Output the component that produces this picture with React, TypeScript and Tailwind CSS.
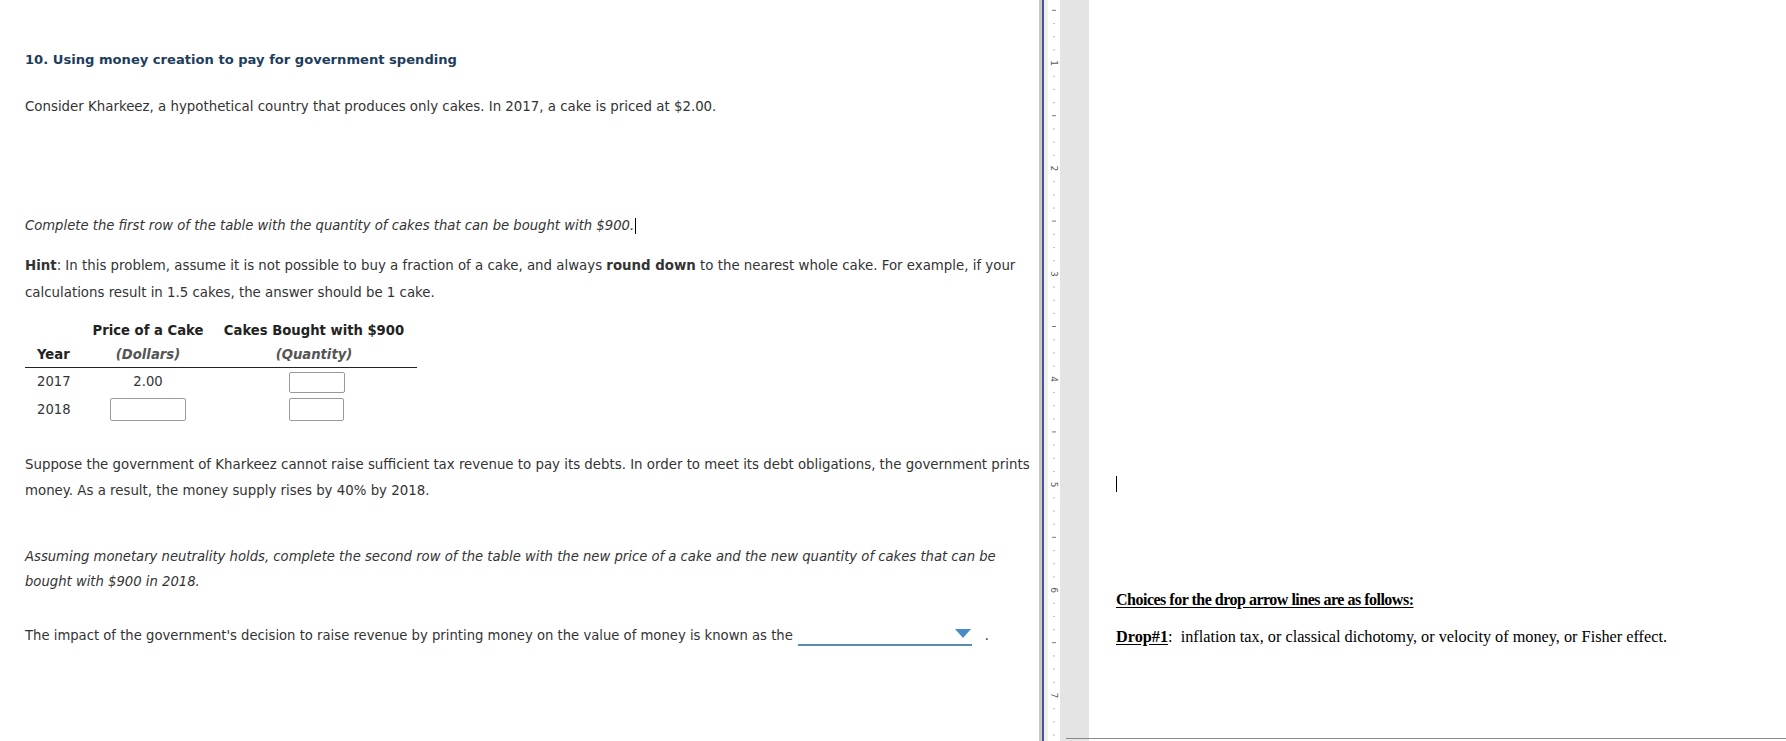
import React from "react";

function Ruler() {
  const inch = 105.4;
  const origin = 63 - inch;
  const els: React.ReactNode[] = [];
  for (let i = 0; i < 80; i++) {
    const y = origin + (i * inch) / 8;
    if (y < 2 || y > 739) continue;
    const k = i % 8;
    if (k === 0) {
      const n = i / 8;
      els.push(
        <text
          key={i}
          x={6}
          y={y}
          fontSize={9}
          fontFamily="DejaVu Sans, sans-serif"
          fill="#555"
          textAnchor="middle"
          dominantBaseline="central"
          transform={`rotate(90 6 ${y})`}
        >
          {n}
        </text>
      );
    } else if (k === 4) {
      els.push(<rect key={i} x={4} y={y - 0.5} width={4} height={1} fill="#777" />);
    } else {
      els.push(<rect key={i} x={5.5} y={y - 0.5} width={1} height={1.2} fill="#888" />);
    }
  }
  return (
    <svg width="12" height="741" viewBox="0 0 12 741" className="block bg-white">
      {els}
    </svg>
  );
}

export default function App() {
  const body = "font-['DejaVu_Sans','Verdana',sans-serif] text-[13.35px] text-[#333]";
  const cols = "grid grid-cols-[60px_126px_206px] items-center";
  return (
    <div className="flex h-[741px] w-[1786px] overflow-hidden bg-white">
      {/* Left question panel */}
      <div className={`w-[1039px] shrink-0 bg-white pl-[25px] pt-[50px] ${body}`}>
        <div className="h-[20px] font-bold text-[13.1px] leading-[20px] text-[#1e3d5c] whitespace-nowrap">
          10. Using money creation to pay for government spending
        </div>
        <div className="mt-[27px] h-[20px] leading-[20px] whitespace-nowrap">
          Consider Kharkeez, a hypothetical country that produces only cakes. In 2017, a cake is priced at $2.00.
        </div>
        <div className="mt-[99px] flex h-[20px] items-center text-[13.2px] leading-[20px] italic whitespace-nowrap">
          <span>Complete the first row of the table with the quantity of cakes that can be bought with $900.</span>
          <span className="ml-[1px] inline-block h-[16px] w-[1px] bg-black" />
        </div>
        <div className="mt-[16px] leading-[27px] whitespace-nowrap">
          <span className="font-bold">Hint</span>: In this problem, assume it is not possible to buy a fraction of a cake, and always{" "}
          <span className="font-bold">round down</span> to the nearest whole cake. For example, if your
          <br />
          calculations result in 1.5 cakes, the answer should be 1 cake.
        </div>

        {/* Table */}
        <div className="mt-[12px] w-[392px] text-[13.2px]">
          <div className={`${cols} h-[25px] font-bold text-[#222] whitespace-nowrap`}>
            <div />
            <div className="text-center">Price of a Cake</div>
            <div className="text-center">Cakes Bought with $900</div>
          </div>
          <div className={`${cols} h-[25px] border-b-[1.5px] border-[#222] whitespace-nowrap`}>
            <div className="pl-[12px] font-bold text-[#222]">Year</div>
            <div className="text-center font-bold italic text-[#555]">(Dollars)</div>
            <div className="text-center font-bold italic text-[#555]">(Quantity)</div>
          </div>
          <div className={`${cols} h-[28px]`}>
            <div className="pl-[12px]">2017</div>
            <div className="text-center">2.00</div>
            <div className="flex justify-center pl-[6px]">
              <input
                readOnly
                className="h-[21px] w-[56px] rounded-[2px] border border-[#9a9a9a] bg-white"
              />
            </div>
          </div>
          <div className={`${cols} h-[27px]`}>
            <div className="pl-[12px]">2018</div>
            <div className="flex justify-center">
              <input
                readOnly
                className="h-[23px] w-[76px] rounded-[2px] border border-[#9a9a9a] bg-white"
              />
            </div>
            <div className="flex justify-center pl-[4px]">
              <input
                readOnly
                className="h-[23px] w-[55px] rounded-[2px] border border-[#9a9a9a] bg-white"
              />
            </div>
          </div>
        </div>

        <div className="mt-[29px] leading-[26px] whitespace-nowrap">
          Suppose the government of Kharkeez cannot raise sufficient tax revenue to pay its debts. In order to meet its debt obligations, the government prints
          <br />
          money. As a result, the money supply rises by 40% by 2018.
        </div>
        <div className="mt-[40px] text-[13.2px] leading-[25px] italic whitespace-nowrap">
          Assuming monetary neutrality holds, complete the second row of the table with the new price of a cake and the new quantity of cakes that can be
          <br />
          bought with $900 in 2018.
        </div>
        <div className="mt-[32px] flex h-[20px] items-start text-[13.2px] leading-[20px] whitespace-nowrap">
          <span>The impact of the government's decision to raise revenue by printing money on the value of money is known as the</span>
          <div className="ml-[5px] flex h-[20px] w-[174px] items-start justify-end border-b-2 border-[#5b8cb4] pr-[1px] pt-[3px]">
            <svg width="16" height="9" viewBox="0 0 16 9">
              <polygon points="0,0 16,0 8,9" fill="#4a8cc6" />
            </svg>
          </div>
          <span className="ml-[13px]">.</span>
        </div>
      </div>

      {/* Separator + ruler */}
      <div className="w-[3px] shrink-0 bg-[#c9c9c9]" />
      <div className="w-[2px] shrink-0 bg-[#45569a]" />
      <div className="w-[4px] shrink-0 bg-[#f1f1f1]" />
      <div className="shrink-0">
        <Ruler />
      </div>
      <div className="w-[29px] shrink-0 bg-[#e4e4e4]" />

      {/* Right document page */}
      <div className="flex flex-1 flex-col bg-white pl-[27px] font-['Liberation_Serif','Times_New_Roman',serif] text-[16px] text-black">
        <div className="mt-[476px] h-[16px] w-[1px] bg-black" />
        <div className="mt-[98px] h-[20px] leading-[20px] font-bold tracking-[-0.5px] underline underline-offset-2 whitespace-nowrap">
          Choices for the drop arrow lines are as follows:
        </div>
        <div className="mt-[17px] h-[20px] text-[16.25px] leading-[20px] whitespace-nowrap">
          <span className="font-bold underline underline-offset-2">Drop#1</span>:&nbsp;&nbsp;inflation tax, or classical dichotomy, or velocity of money, or Fisher effect.
        </div>
        <div className="mt-auto mb-[2px] -ml-[50px] h-px bg-[#8a8a8a]" />
      </div>
    </div>
  );
}
